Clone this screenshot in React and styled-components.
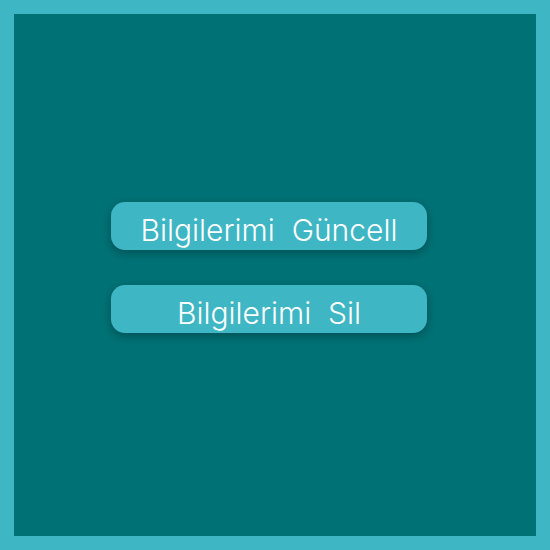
import React from "react";
import styled, { createGlobalStyle } from "styled-components";

const GlobalStyle = createGlobalStyle`
  *, *::before, *::after {
    box-sizing: border-box;
  }
  body {
    margin: 0;
  }
`;

const Frame = styled.main`
  display: flex;
  flex-direction: column;
  align-items: center;
  justify-content: center;
  gap: 35px;
  min-height: 100vh;
  padding: 0 12px 15px 0;
  border: 14px solid #3eb6c4;
  background: #007275;
`;

const ActionButton = styled.button`
  width: 62%;
  min-height: 48px;
  padding: 8px 12px 0;
  border: 0;
  border-radius: 14px;
  background: #3eb6c4;
  box-shadow: 0 3px 10px rgba(0, 30, 40, 0.4);
  color: #ffffff;
  font-family: Inter, Roboto, sans-serif;
  font-size: 30px;
  font-weight: 350;
  line-height: 40px;
  text-align: center;
  white-space: pre;
  cursor: pointer;
`;

const actions = ["Bilgilerimi  Güncell", "Bilgilerimi  Sil"];

export default function App() {
  return (
    <>
      <GlobalStyle />
      <Frame>
        {actions.map((label) => (
          <ActionButton key={label} type="button">
            {label}
          </ActionButton>
        ))}
      </Frame>
    </>
  );
}
